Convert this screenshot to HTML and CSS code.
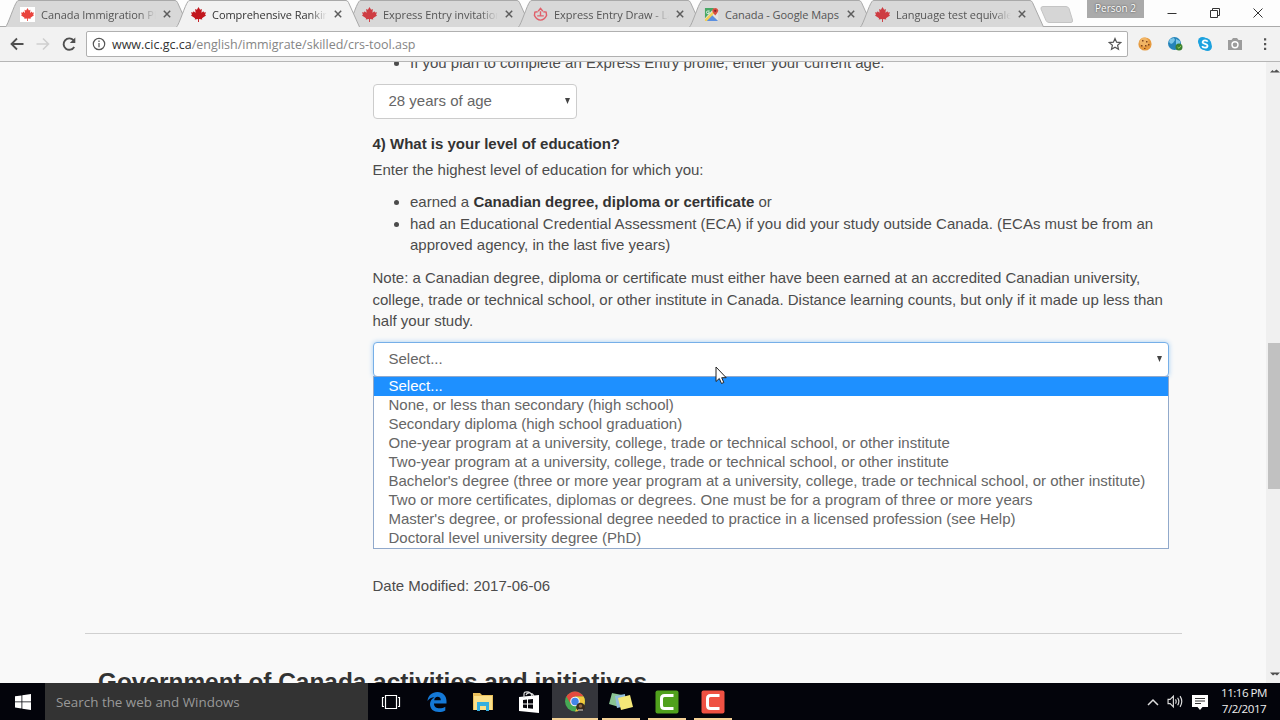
FILE: index.html
```html
<!DOCTYPE html>
<html lang="en">
  <head>
    <meta charset="UTF-8" />
    <meta name="viewport" content="width=device-width, initial-scale=1.0" />
    <title>Comprehensive Ranking System</title>
    <link rel="stylesheet" href="styles.css">
  </head>

  <body>
    <svg class="defs" width="0" height="0">
      <defs>
        <symbol id="leaf" viewBox="0 0 16 16">
          <path d="M8 0 9.7 3 11.6 2.2 11.1 6 13.3 4.4 13.9 5.8 16 5.5 15 8 16 9 11.7 12 12 13.3 8.5 12.9V16H7.5V12.9L4 13.3 4.3 12 0 9 1 8 0 5.5 2.1 5.8 2.7 4.4 4.9 6 4.4 2.2 6.3 3Z" />
        </symbol>
        <symbol id="tab" viewBox="0 0 184 27">
          <path d="M.5 27C3 25 9 5 12 1.500Q12.500.5 14 .5H170Q171.500.5 172.500 2.500L183.500 27" stroke="#a9a9a9" />
        </symbol>
        <symbol id="close" viewBox="0 0 8 8">
          <path d="M.8.8 7.200 7.200M7.200.8.8 7.200" stroke="#5c5c5c" stroke-width="1.500" />
        </symbol>
      </defs>
    </svg>

    <!-- browser tabs -->
    <header class="tabs">
      <div class="tab">
        <svg class="tab-shape"><use href="#tab" /></svg>
        <svg class="favicon boxed"><use href="#leaf" /></svg>
        <span class="tab-title">Canada Immigration Pl</span>
        <svg class="tab-close"><use href="#close" /></svg>
      </div>
      <div class="tab active">
        <svg class="tab-shape"><use href="#tab" /></svg>
        <svg class="favicon"><use href="#leaf" /></svg>
        <span class="tab-title">Comprehensive Ranking</span>
        <svg class="tab-close"><use href="#close" /></svg>
      </div>
      <div class="tab">
        <svg class="tab-shape"><use href="#tab" /></svg>
        <svg class="favicon"><use href="#leaf" /></svg>
        <span class="tab-title">Express Entry invitation</span>
        <svg class="tab-close"><use href="#close" /></svg>
      </div>
      <div class="tab">
        <svg class="tab-shape"><use href="#tab" /></svg>
        <svg class="favicon" viewBox="0 0 16 16"><path d="M5.500 4.500 8 1.500 10.500 4.500M5 5 2 5.500 1.500 9Q4 14 8 14T14.500 9L14 5.500 11 5M8 4.500V9.500M4.500 9.500H11.500" fill="none" stroke="#e0606a" stroke-width="1.500" /></svg>
        <span class="tab-title">Express Entry Draw - La</span>
        <svg class="tab-close"><use href="#close" /></svg>
      </div>
      <div class="tab">
        <svg class="tab-shape"><use href="#tab" /></svg>
        <svg class="favicon" viewBox="0 0 16 16">
          <path d="M1 1H15V15H1Z" fill="#e8e4d8" />
          <path d="M1 1H11L1 12Z" fill="#48a765" />
          <path d="M1 15 8 8 15 15Z" fill="#5b8fe0" />
          <path d="M1 13 12 2 14 4 3 15H1Z" fill="#f2cf58" />
          <path d="M9 8 15 14V7Z" fill="#e4e4e4" />
          <path d="M12 9Q8.500 5 8.800 3.500A3.300 3.300 0 0 1 15.200 3.500Q15.500 5 12 9Z" fill="#d84d43" />
          <circle cx="12" cy="4" r="1.200" fill="#7c2925" />
          <path d="M6 4.200H4.200A1.500 1.500 0 1 0 5.600 5.400H4.500" fill="none" stroke="#fff" stroke-width=".8" />
        </svg>
        <span class="tab-title">Canada - Google Maps</span>
        <svg class="tab-close"><use href="#close" /></svg>
      </div>
      <div class="tab">
        <svg class="tab-shape"><use href="#tab" /></svg>
        <svg class="favicon"><use href="#leaf" /></svg>
        <span class="tab-title">Language test equivale</span>
        <svg class="tab-close"><use href="#close" /></svg>
      </div>
      <svg class="new-tab" viewBox="0 0 34 17"><path d="M3 .5H26Q28 .5 29 2.500L32.500 14Q33 16.500 31 16.500H9Q7 16.500 6 14.500L1 3Q.5.5 3 .5Z" fill="#d6d6d6" stroke="#c4c4c4" /></svg>
      <div class="window-buttons">
        <span class="person">Person 2</span>
        <svg class="win-icon" viewBox="0 0 12 12"><path d="M1.500 6.500H10.500" /></svg>
        <svg class="win-icon" viewBox="0 0 12 12"><path d="M1.500 3.500H8.500V10.500H1.500ZM3.500 3V1.500H10.500V8.500H9" /></svg>
        <svg class="win-icon" viewBox="0 0 12 12"><path d="M1.500 1.500 10.500 10.500M10.500 1.500 1.500 10.500" /></svg>
      </div>
    </header>

    <!-- address bar -->
    <nav class="toolbar">
      <svg class="nav-icon" viewBox="0 0 16 16"><path d="M14.500 8H3M8 2.500 2.500 8 8 13.500" stroke="#505050" stroke-width="1.800" /></svg>
      <svg class="nav-icon" viewBox="0 0 16 16"><path d="M1.500 8H13M8 2.500 13.500 8 8 13.500" stroke="#cfcfcf" stroke-width="1.600" /></svg>
      <svg class="nav-icon" viewBox="0 0 16 16"><path d="M13.200 11A5.700 5.700 0 1 1 12.500 4.200" stroke="#505050" stroke-width="1.900" /><path d="M14.300 1.500V7H8.800Z" fill="#505050" /></svg>
      <div class="address">
        <svg class="info" viewBox="0 0 14 14"><circle cx="7" cy="7" r="5.700" /><path d="M7 6V10.300M7 3.500V4.900" /></svg>
        <span class="url"><b>www.cic.gc.ca</b>/english/immigrate/skilled/crs-tool.asp</span>
        <svg class="star" viewBox="0 0 14 14"><path d="M7 1.500 8.600 5.200 12.700 5.600 9.600 8.300 10.500 12.300 7 10.200 3.500 12.300 4.400 8.300 1.300 5.600 5.400 5.200Z" /></svg>
      </div>
      <div class="extensions">
        <svg viewBox="0 0 16 16"><circle cx="8" cy="8" r="6.600" fill="#e69a3f" /><circle cx="7" cy="6" r="4.500" fill="#f1b565" /><path d="M5 4h1.500v1.500H5zM9 5h1.500v1.500H9zM4 9h1.500v1.500H4zM8 9h1.500v1.500H8zM11 8h1.500v1.500H11zM7 12h1.500v1H7z" fill="#81451c" /></svg>
        <svg viewBox="0 0 16 16"><circle cx="7.500" cy="7.500" r="6.500" fill="#2584ba" /><path d="M3 3 7 2 8 4 6 7 4 8 2 6ZM9 3 13 5 13 8 9 9Z" fill="#7cc6e8" /><circle cx="12" cy="11" r="3.500" fill="#397f31" /><path d="M10.500 11 12 12.300 14 9.700" fill="none" stroke="#9fd15d" /></svg>
        <svg viewBox="0 0 16 16"><circle cx="5.500" cy="5.500" r="4.500" fill="#1da2df" /><circle cx="10.500" cy="10.500" r="4.500" fill="#1da2df" /><circle cx="8" cy="8" r="6.200" fill="#1da2df" /><path d="M10.700 5.600Q10 4.400 8 4.400T5.500 6.200Q5.600 7.300 8 7.900T10.600 9.800Q10.400 11.600 8 11.600T5.200 10" fill="none" stroke="#fff" stroke-width="1.700" /></svg>
        <svg viewBox="0 0 16 16"><path d="M1 4H4.500L6 2H10L11.500 4H15V14H1Z" fill="#9c9c9c" /><circle cx="8" cy="8.700" r="3" fill="#9c9c9c" stroke="#fff" stroke-width="1.400" /></svg>
        <svg viewBox="0 0 16 16"><path d="M7 2.200h2.200v2.200H7zM7 7h2.200v2.200H7zM7 11.800h2.200V14H7z" fill="#555" /></svg>
      </div>
    </nav>

    <div class="viewport">
      <main class="page">
        <div class="form">
          <ul class="hint">
            <li>If you plan to complete an Express Entry profile, enter your current age.</li>
          </ul>
          <div class="select age">28 years of age<svg class="arrow" viewBox="0 0 5 6"><path d="M0 0H5L2.500 6Z" /></svg></div>

          <h3>4) What is your level of education?</h3>
          <p class="intro">Enter the highest level of education for which you:</p>
          <ul class="conditions">
            <li>earned a <strong>Canadian degree, diploma or certificate</strong> or</li>
            <li class="eca">had an Educational Credential Assessment (ECA) if you did your study outside Canada. (ECAs must be from an<br>approved agency, in the last five years)</li>
          </ul>
          <p class="note">Note: a Canadian degree, diploma or certificate must either have been earned at an accredited Canadian university,<br>college, trade or technical school, or other institute in Canada. Distance learning counts, but only if it made up less than<br>half your study.</p>

          <div class="select education">
            Select...<svg class="arrow" viewBox="0 0 5 6"><path d="M0 0H5L2.500 6Z" /></svg>
            <ul class="options">
              <li class="selected">Select...</li>
              <li>None, or less than secondary (high school)</li>
              <li>Secondary diploma (high school graduation)</li>
              <li>One-year program at a university, college, trade or technical school, or other institute</li>
              <li>Two-year program at a university, college, trade or technical school, or other institute</li>
              <li>Bachelor's degree (three or more year program at a university, college, trade or technical school, or other institute)</li>
              <li>Two or more certificates, diplomas or degrees. One must be for a program of three or more years</li>
              <li>Master's degree, or professional degree needed to practice in a licensed profession (see Help)</li>
              <li>Doctoral level university degree (PhD)</li>
            </ul>
            <svg class="cursor" viewBox="0 0 12 19"><path d="M1 1V15.500L4.300 12.500 6.500 17.500 8.800 16.500 6.700 11.700H11.200Z" fill="#fff" stroke="#222" /></svg>
          </div>
          <p class="modified">Date Modified: 2017-06-06</p>
        </div>
        <h2>Government of Canada activities and initiatives</h2>
      </main>
      <div class="scrollbar">
        <svg class="scroll-arrow" viewBox="0 0 12 6"><path d="M2 4.500 4.500 2 6 3.500 8.500 1.500 12 4.500Z" fill="#505050" /></svg>
        <div class="thumb"></div>
        <svg class="scroll-arrow" viewBox="0 0 12 6"><path d="M2 1.500H12L9 4.500 7 3 5 4.500Z" fill="#505050" /></svg>
      </div>
    </div>

    <!-- taskbar -->
    <footer class="taskbar">
      <div class="start">
        <svg viewBox="0 0 16 16"><path d="M0 2.300 6.500 1.400V7.500H0ZM7.300 1.300 16 0V7.500H7.300ZM0 8.300H6.500V14.500L0 13.600ZM7.300 8.300H16V16L7.300 14.700Z" fill="#fff" /></svg>
      </div>
      <div class="search">Search the web and Windows</div>
      <div class="task">
        <svg width="20" height="16" viewBox="0 0 20 16"><path d="M4.500 1.500H15.500V14.500H4.500ZM3 3.500H1.500V12.500H3M17 3.500H18.500V12.500H17" fill="none" stroke="#fff" stroke-width="1.200" /></svg>
      </div>
      <div class="task">
        <svg width="20" height="20" viewBox="0 0 20 20"><path d="M.5 9C1 3.500 5 0 10.500 0 16 0 19.500 4 19.500 9V11.500H7C7 15 9.500 16.300 12.500 16.300 14.700 16.300 16.500 15.700 18.300 14.700V18.500C16.500 19.500 14.300 20 12 20 6.500 20 3 17 3 12 3 9 4.800 6.500 7.500 5.200 4.500 5.300 2 6.600.5 9ZM7.200 8.200H13.800C13.800 6 12.700 4.700 10.700 4.700S7.500 6 7.200 8.200Z" fill="#1479d7" /></svg>
      </div>
      <div class="task">
        <svg width="22" height="20" viewBox="0 0 22 20"><path d="M1 1H8L10 3H21V18H1Z" fill="#e9bf5b" /><path d="M2 4H20V18H2Z" fill="#fbe08b" /><path d="M5 19V10H17V19H14V14H8V19Z" fill="#36afe0" /></svg>
      </div>
      <div class="task">
        <svg width="20" height="22" viewBox="0 0 20 22"><path d="M0 6 20 4V22L0 20Z" fill="#fff" /><path d="M5 7V3Q5 .8 8 .8 12 .8 13 5M7 4Q8 1.500 11 2T15 5" fill="none" stroke="#ddd" stroke-width="1.200" /><path d="M4 9 8 8.600V12.400H4ZM9 8.500 14 8V12.400H9ZM4 13.400H8V17.200L4 16.800ZM9 13.400H14V17.800L9 17.300Z" fill="#05050b" /></svg>
      </div>
      <div class="task running current">
        <svg width="20" height="22" viewBox="0 0 20 22"><circle cx="10" cy="10.500" r="10" fill="#46a854" /><path d="M1.400 5.500A10 10 0 0 1 18.600 5.500H10L5.800 13Z" fill="#e34a3f" /><path d="M10 5.500H18.600A10 10 0 0 1 10 20.500L14 13Z" fill="#f3c93c" /><circle cx="10" cy="10.500" r="4.800" fill="#f5f5f5" /><circle cx="10" cy="10.500" r="3.700" fill="#4285e8" /><circle cx="15.500" cy="16" r="4.300" fill="#382a1e" /><circle cx="15.500" cy="15" r="1.800" fill="#94673d" /><path d="M13 19H18" stroke="#ddd" stroke-width="1" /></svg>
      </div>
      <div class="task running">
        <svg width="24" height="20" viewBox="0 0 24 20"><path d="M3 1 13 3 10 15 0 12Z" fill="#8ac492" /><path d="M6 4 16 2 17 14 8 16Z" fill="#91bedc" /><path d="M9 6 21 3 24 15 12 18Z" fill="#f5e878" /></svg>
      </div>
      <div class="task running">
        <svg width="24" height="24" viewBox="0 0 24 24"><rect x=".5" y=".5" width="23" height="23" rx="2" fill="#50a11d" /><path d="M18.500 5.500H9.500Q6.500 5.500 6.500 8.500V15.500Q6.500 18.500 9.500 18.500H18.500" fill="none" stroke="#fff" stroke-width="3" /></svg>
      </div>
      <div class="task running">
        <svg width="24" height="24" viewBox="0 0 24 24"><rect x=".5" y=".5" width="23" height="23" rx="2" fill="#ef5143" /><path d="M18.500 5.500H9.500Q6.500 5.500 6.500 8.500V15.500Q6.500 18.500 9.500 18.500H18.500" fill="none" stroke="#fff" stroke-width="3" /></svg>
      </div>
      <div class="tray">
        <svg width="12" height="8" viewBox="0 0 12 8"><path d="M1 7 6 2 11 7" fill="none" stroke="#ddd" stroke-width="1.500" /></svg>
        <svg width="17" height="15" viewBox="0 0 16 14"><path d="M1 5H3L6 2V12L3 9H1ZM8 5Q9.300 7 8 9M10 3.500Q12.300 7 10 10.500M12.300 2Q15.500 7 12.300 12" fill="none" stroke="#ddd" stroke-width="1.100" /></svg>
        <svg width="16" height="16" viewBox="0 0 16 16"><path d="M0 1H16V13H10.500L8 16 5.500 13H0Z" fill="#fff" /><path d="M3 4.500H13M3 7H13M3 9.500H9" stroke="#333" stroke-width="1" /></svg>
        <div class="clock">
          <span>11:16 PM</span>
          <span>7/2/2017</span>
        </div>
      </div>
    </footer>
  </body>
</html>
```
FILE: styles.css
```css
* {
  box-sizing: border-box;
}

body {
  margin: 0;
  width: 1280px;
  height: 720px;
  overflow: hidden;
  display: flex;
  flex-direction: column;
  background: #fff;
  font-family: "Liberation Sans", Arial, sans-serif;
  color: #4c4c4c;
}

ul,
p,
h2,
h3 {
  margin: 0;
  padding: 0;
}

svg {
  flex: none;
  display: block;
}

.defs {
  position: absolute;
}

/* tabs */
.tabs {
  display: flex;
  height: 27px;
  padding-left: 5px;
  flex: none;
  background: #fdfdfd;
  box-shadow: inset 0 -1px #aaa;
  font-family: "Open Sans", "Noto Sans", sans-serif;
}

.tab {
  position: relative;
  display: flex;
  flex: none;
  align-items: center;
  width: 184px;
  margin-right: -13px;
  padding: 1px 0 0 15px;
  color: #555;
}

.tab-shape {
  position: absolute;
  top: 0;
  left: 0;
  width: 184px;
  height: 27px;
  fill: #d8d8d8;
}

.active {
  z-index: 2;
  color: #333;
}

.active .tab-shape {
  fill: #f2f2f2;
}

.favicon {
  position: relative;
  width: 15px;
  height: 15px;
  fill: #ce3c42;
}

.active .favicon {
  fill: #c2161d;
}

.boxed {
  background: #fff;
  fill: #e9443d;
  padding: 1px;
}

.tab-title {
  position: relative;
  width: 116px;
  margin-left: 6px;
  overflow: hidden;
  white-space: nowrap;
  font-size: 11px;
  letter-spacing: -0.05px;
  -webkit-mask-image: linear-gradient(to right, #000 84%, transparent 99%);
  mask-image: linear-gradient(to right, #000 84%, transparent 99%);
}

.tab:nth-child(5) .tab-title {
  -webkit-mask-image: none;
  mask-image: none;
}

.tab-close {
  position: relative;
  width: 8px;
  height: 8px;
  margin-left: 6px;
}

.new-tab {
  width: 34px;
  height: 17px;
  margin: 6px 0 0 9px;
}

.window-buttons {
  display: flex;
  flex: none;
  align-items: center;
  margin-left: 13px;
}

.person {
  align-self: flex-start;
  width: 57px;
  height: 18px;
  margin-right: 22px;
  background: #aaa;
  color: #fff;
  font-size: 10px;
  line-height: 17px;
  text-align: center;
  text-shadow: 0 0 2px #333;
}

.win-icon {
  width: 12px;
  height: 12px;
  margin: 0 31px 2px 0;
  fill: none;
  stroke: #333;
}

/* toolbar */
.toolbar {
  display: flex;
  align-items: center;
  height: 35px;
  flex: none;
  padding-left: 9px;
  background: #f2f2f2;
  border-bottom: 1px solid #b6b6b6;
}

.nav-icon {
  width: 16px;
  height: 16px;
  margin-right: 10px;
  fill: none;
}

.address {
  display: flex;
  align-items: center;
  width: 1042px;
  height: 26px;
  margin-left: -1px;
  padding: 0 5px;
  background: #fff;
  border: 1px solid #b0b0b0;
  border-radius: 2px;
}

.info,
.star {
  width: 14px;
  height: 14px;
  fill: none;
  stroke: #555;
  stroke-width: 1.2;
}

.url {
  flex: 1;
  margin-left: 6px;
  font-family: "Open Sans", "Noto Sans", sans-serif;
  font-size: 12.5px;
  color: #858585;
}

.url b {
  font-weight: 400;
  color: #333;
}

.extensions {
  display: flex;
  gap: 14px;
  margin-left: 9px;
}

.extensions svg {
  width: 16px;
  height: 16px;
}

/* page */
.viewport {
  display: flex;
  height: 621px;
  flex: none;
  overflow: hidden;
  background: #f9f9f9;
}

.page {
  width: 1266px;
  margin-top: -10.4px;
}

.form {
  height: 582px;
  margin: 0 84px 0 84.5px;
  padding-left: 288px;
  border-bottom: 1px solid #d0d0d0;
  font-size: 15px;
  line-height: 21.6px;
  white-space: nowrap;
}

.hint,
.conditions {
  padding-left: 37.5px;
}

.eca {
  letter-spacing: 0.01px;
}

.select {
  position: relative;
  height: 35px;
  padding-left: 15px;
  background: #fff;
  border: 1px solid #ccc;
  border-radius: 4px;
  line-height: 32px;
  color: #666;
}

.age {
  width: 204.5px;
  margin-top: 10.8px;
}

.arrow {
  position: absolute;
  top: 13px;
  right: 6px;
  width: 5px;
  height: 6px;
  fill: #444;
}

h3 {
  margin-top: 14px;
  font-size: 15px;
  color: #333;
}

strong {
  color: #333;
}

.intro {
  margin-top: 4.2px;
}

.conditions {
  margin-top: 10.8px;
}

.note {
  margin-top: 11px;
}

.education {
  width: 796px;
  margin-top: 10px;
  border-color: #76afe8;
  box-shadow: 0 0 5px #a5cff5;
}

.options {
  position: absolute;
  top: 33px;
  left: -1px;
  width: 796px;
  height: 173px;
  background: #fff;
  border: 1px solid #91a9cb;
  list-style: none;
}

.options li {
  height: 19px;
  padding-left: 15px;
  line-height: 17px;
  letter-spacing: 0.005px;
}

.options .selected {
  background: #1e90ff;
  color: #fff;
}

.cursor {
  position: absolute;
  top: 23px;
  left: 341px;
  width: 12px;
  height: 19px;
}

.modified {
  margin-top: 197.8px;
}

h2 {
  margin: 34px 0 0 98px;
  font-size: 24.4px;
  line-height: 28px;
  color: #333;
}

.scrollbar {
  display: flex;
  flex-direction: column;
  width: 14px;
  padding: 6px 0;
  background: #f0f0f0;
}

.scroll-arrow {
  width: 12px;
  height: 6px;
  margin-left: 2px;
}

.thumb {
  height: 146px;
  margin: 269px 0 auto 2px;
  background: #c1c1c1;
}

/* taskbar */
.taskbar {
  display: flex;
  height: 37px;
  flex: none;
  background: #03040b;
  font-family: "Open Sans", "Noto Sans", sans-serif;
}

.start {
  display: flex;
  align-items: center;
  width: 45px;
  padding-left: 15px;
}

.start svg {
  width: 16px;
  height: 16px;
}

.search {
  width: 323px;
  padding-left: 11px;
  background: #333;
  color: #999;
  font-size: 13.4px;
  line-height: 38px;
}

.task {
  display: flex;
  align-items: center;
  justify-content: center;
  width: 46px;
}

.running {
  background: linear-gradient(#f4d196, #f4d196) bottom / 38px 2px no-repeat;
}

.current {
  background-color: #35363c;
  background-size: 46px 2px;
}

.tray {
  display: flex;
  align-items: center;
  gap: 8px;
  margin-left: auto;
  padding-right: 13px;
}

.clock {
  display: flex;
  flex-direction: column;
  align-items: center;
  width: 46px;
  margin: -2px 0 0 5px;
  color: #eee;
  font-size: 11.6px;
  line-height: 16px;
  letter-spacing: -0.5px;
  white-space: nowrap;
}
```
